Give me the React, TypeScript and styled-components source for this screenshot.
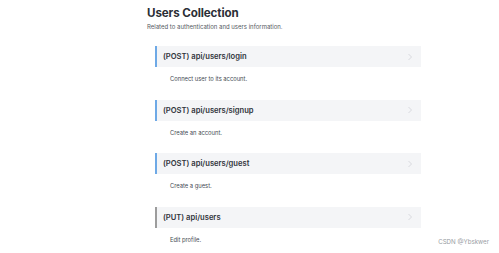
import React, { FC } from "react";
import styled, { createGlobalStyle } from "styled-components";

type Endpoint = {
  method: string;
  path: string;
  description: string;
  accent: string;
};

const endpoints: Endpoint[] = [
  { method: "POST", path: "api/users/login", description: "Connect user to its account.", accent: "#6ea9e6" },
  { method: "POST", path: "api/users/signup", description: "Create an account.", accent: "#6ea9e6" },
  { method: "POST", path: "api/users/guest", description: "Create a guest.", accent: "#6ea9e6" },
  { method: "PUT", path: "api/users", description: "Edit profile.", accent: "#9c9c9c" },
];

const GlobalStyle = createGlobalStyle`
  html, body {
    margin: 0;
    padding: 0;
    background: #ffffff;
    font-family: Inter, "Noto Sans", sans-serif;
  }
`;

const Page = styled.div`
  position: relative;
  width: 499px;
  height: 253px;
  overflow: hidden;
  padding: 5px 0 0 147px;
  box-sizing: border-box;
`;

const Title = styled.h1`
  margin: 0;
  font-size: 11.6px;
  line-height: 16px;
  font-weight: 700;
  color: #2b2f36;
  letter-spacing: -0.1px;
`;

const Subtitle = styled.p`
  margin: 1px 0 0;
  font-size: 6px;
  line-height: 9px;
  color: #555a62;
`;

const List = styled.div`
  display: flex;
  flex-direction: column;
  margin: 15px 0 0 8px;
  width: 266px;
`;

const Item = styled.div`
  height: 53.67px;
  display: flex;
  flex-direction: column;
`;

const Header = styled.div<{ $accent: string }>`
  height: 21px;
  display: flex;
  align-items: center;
  justify-content: space-between;
  background: #f4f5f7;
  border-left: 2px solid ${(p) => p.$accent};
  padding: 0 8px 0 6px;
  box-sizing: border-box;
`;

const HeaderText = styled.span`
  font-size: 7.6px;
  font-weight: 600;
  color: #30343b;
`;

const Chevron = styled.svg`
  width: 6px;
  height: 8px;
`;

const Description = styled.div`
  padding: 8px 0 0 15px;
  font-size: 5.8px;
  line-height: 8px;
  color: #444a52;
`;

const Watermark = styled.span`
  position: absolute;
  right: 10px;
  bottom: 8px;
  font-size: 6.2px;
  color: #9a9ea4;
`;

const App: FC = () => {
  return (
    <>
      <GlobalStyle />
      <Page>
        <Title>Users Collection</Title>
        <Subtitle>Related to authentication and users information.</Subtitle>
        <List>
          {endpoints.map((ep) => (
            <Item key={ep.path}>
              <Header $accent={ep.accent}>
                <HeaderText>
                  ({ep.method}) {ep.path}
                </HeaderText>
                <Chevron viewBox="0 0 6 8">
                  <path d="M1.5 1 L4.5 4 L1.5 7" fill="none" stroke="#d4d6da" strokeWidth="0.9" />
                </Chevron>
              </Header>
              <Description>{ep.description}</Description>
            </Item>
          ))}
        </List>
        <Watermark>CSDN @Ybskwer</Watermark>
      </Page>
    </>
  );
};

export default App;
